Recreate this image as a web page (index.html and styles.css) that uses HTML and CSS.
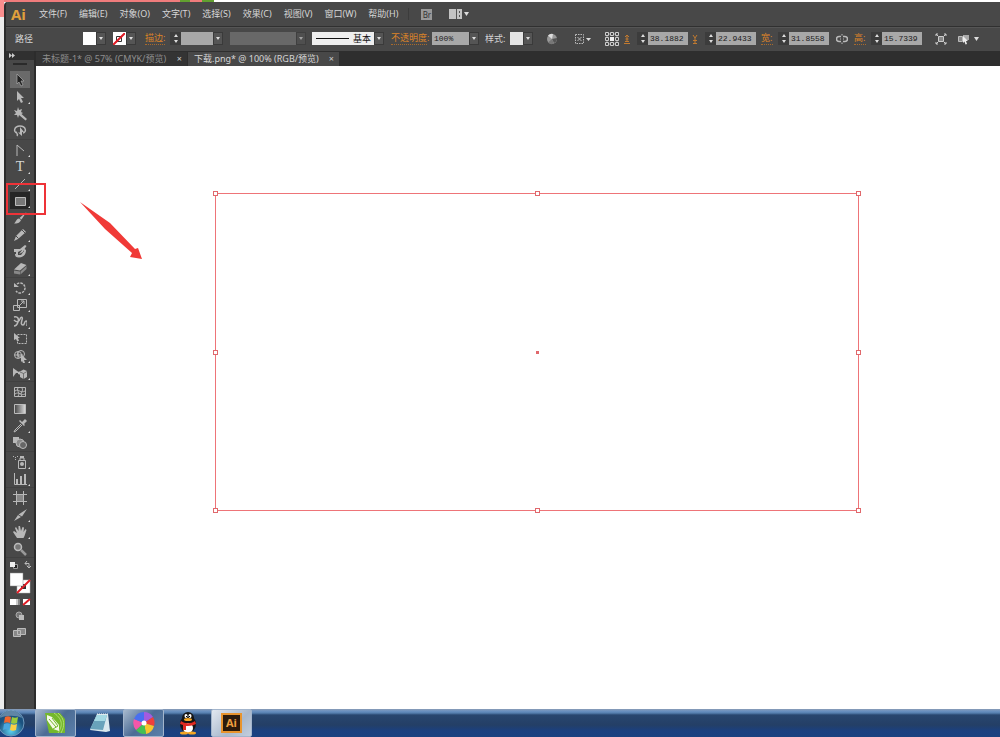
FILE: index.html
```
<!DOCTYPE html>
<html lang="zh-CN">
<head>
    <meta charset="UTF-8">
    <meta name="viewport" content="width=device-width, initial-scale=1.0">
    <title>下载.png</title>
    <link rel="stylesheet" href="styles.css">
</head>
<body>
    <div class="desktop">
        <div class="app">
            <header class="menubar">
                <span class="logo">Ai</span>
                <nav class="menus">
                    <a href="#">文件(F)</a>
                    <a href="#">编辑(E)</a>
                    <a href="#">对象(O)</a>
                    <a href="#">文字(T)</a>
                    <a href="#">选择(S)</a>
                    <a href="#">效果(C)</a>
                    <a href="#">视图(V)</a>
                    <a href="#">窗口(W)</a>
                    <a href="#">帮助(H)</a>
                </nav>
                <button class="bridge" aria-label="Bridge">Br</button>
                <button class="arrange" aria-label="排列文档">
                    <svg width="20" height="12" viewBox="0 0 20 12"><path fill="#c4c4c4" d="M0 1h13v10H0z"/><path stroke="#555" d="M7.500 1v10M10.500 3v2M10.500 7v2"/><path fill="#ddd" d="M15 4h5l-2.500 4z"/></svg>
                </button>
            </header>

            <div class="controls">
                <span class="path-name">路径</span>
                <div class="field">
                    <button class="swatch" aria-label="填色"></button><button class="drop" aria-label="填色菜单"></button>
                </div>
                <div class="field">
                    <button class="swatch none" aria-label="描边颜色"><svg width="12" height="12" viewBox="0 0 12 12"><path fill="none" stroke="#333" d="M3.500 3.500h5v5h-5z"/><path stroke="#e01b24" stroke-width="2" d="M0 12L12 0"/></svg></button><button class="drop" aria-label="描边颜色菜单"></button>
                </div>
                <div class="field">
                    <label class="orange link wide" for="stroke">描边:</label>
                    <button class="spin" aria-label="调整描边"></button><input class="gray" id="stroke" type="text"><button class="drop" aria-label="描边菜单"></button>
                </div>
                <div class="field">
                    <select class="profile" aria-label="变量宽度配置文件" disabled><option></option></select><span class="drop dim"></span>
                </div>
                <div class="field">
                    <span class="brush"><select aria-label="画笔定义"><option>基本</option></select></span><span class="drop"></span>
                </div>
                <div class="field">
                    <label class="orange link opacity" for="opacity">不透明度:</label>
                    <input class="percent" id="opacity" type="text" value="100%"><button class="drop" aria-label="不透明度菜单"></button>
                </div>
                <div class="field">
                    <span class="style-name">样式:</span>
                    <button class="swatch pale" aria-label="图形样式"></button><button class="drop" aria-label="样式菜单"></button>
                </div>
                <button class="tiny" aria-label="重新着色图稿">
                    <svg width="12" height="12" viewBox="0 0 12 12"><circle cx="6" cy="6" r="5" fill="#999"/><path fill="#ddd" d="M6 6L2 2.500A5 5 0 0 1 7 1z"/><path fill="#555" d="M6 6l5-1a5 5 0 0 1-3 5z"/><path fill="#777" d="M6 6l2 4.500a5 5 0 0 1-6-1z"/></svg>
                </button>
                <button class="tiny" aria-label="对齐">
                    <svg width="18" height="12" viewBox="0 0 18 12"><path fill="none" stroke="#bbb" stroke-dasharray="1.500 1" d="M1.500 1.500h8v9h-8z"/><path stroke="#bbb" d="M3.500 4l4 4M7.500 4l-4 4"/><path fill="#ddd" d="M12 5h5l-2.500 3z"/></svg>
                </button>
                <button class="tiny" aria-label="参考点">
                    <svg width="16" height="16" viewBox="0 0 16 16"><path fill="none" stroke="#999" d="M3 3h10v10H3z"/><path fill="#484848" stroke="#ccc" d="M1.500 1.500h3v3h-3zM6.500 1.500h3v3h-3zM11.500 1.500h3v3h-3zM1.500 6.500h3v3h-3zM11.500 6.500h3v3h-3zM1.500 11.500h3v3h-3zM6.500 11.500h3v3h-3zM11.500 11.500h3v3h-3z"/><path fill="#eee" d="M6 6h4v4H6z"/></svg>
                </button>
                <div class="field">
                    <label class="orange axis" for="x"><svg width="6" height="10" viewBox="0 0 6 10"><path fill="none" stroke="#c17a30" d="M0 9.500h6M1 7.500h4M3 1v6M1 3l2-2 2 2M1.500 5h3"/></svg></label>
                    <button class="spin" aria-label="调整 X"></button><input class="num" id="x" aria-label="X" type="text" value="38.1882">
                </div>
                <div class="field">
                    <label class="orange axis" for="y"><svg width="6" height="10" viewBox="0 0 6 10"><path fill="none" stroke="#c17a30" d="M1 1l2 3 2-3M3 4v5M1 6.500h4M1 9.500h4"/></svg></label>
                    <button class="spin" aria-label="调整 Y"></button><input class="num" id="y" aria-label="Y" type="text" value="22.9433">
                </div>
                <div class="field">
                    <label class="orange link size" for="w">宽:</label>
                    <button class="spin" aria-label="调整宽度"></button><input class="num" id="w" type="text" value="31.8558">
                </div>
                <button class="tiny" aria-label="约束宽度和高度比例">
                    <svg width="12" height="10" viewBox="0 0 12 10"><path fill="none" stroke="#bbb" stroke-width="1.500" d="M5 2.500H3a2.500 2.500 0 0 0 0 5h2M7 2.500h2a2.500 2.500 0 0 1 0 5H7"/><path stroke="#bbb" d="M4 5h1M7 5h1M6 0v1.500M6 8.500V10"/></svg>
                </button>
                <div class="field">
                    <label class="orange link size" for="h">高:</label>
                    <button class="spin" aria-label="调整高度"></button><input class="num" id="h" type="text" value="15.7339">
                </div>
                <button class="tiny" aria-label="隔离选中的对象">
                    <svg width="12" height="12" viewBox="0 0 12 12"><path fill="#888" stroke="#ccc" d="M3.500 3.500h5v5h-5z"/><path fill="none" stroke="#ccc" d="M1 3V1h2M9 1h2v2M1 9v2h2M9 11h2V9M1 1l2 2M11 1L9 3M1 11l2-2M11 11L9 9"/></svg>
                </button>
                <button class="tiny" aria-label="选择类似的对象">
                    <svg width="22" height="12" viewBox="0 0 22 12"><path fill="#888" stroke="#bbb" d="M.5 3.500h4v5h-4z"/><path fill="#aaa" d="M5 2h6v5H5z"/><path fill="#eee" d="M5 3l5 5H8l1 3-1.500.5-1-3L5 10z"/><path fill="#ddd" d="M16 4h5l-2.500 4z"/></svg>
                </button>
            </div>

            <div class="workspace">
                <aside class="toolbox">
                    <div class="collapse">
                        <svg width="6" height="5" viewBox="0 0 6 5"><path fill="#ccc" d="M0 0l3 2.500L0 5zM3 0l3 2.500L3 5z"/></svg>
                    </div>
                    <div class="grip"></div>
                    <div class="tools">
                        <div class="group">
                            <button class="tool active" aria-label="选择工具"><svg viewBox="0 0 14 14"><path fill="#222" stroke="#aaa" stroke-width=".7" d="M4 1l7 7H8l2 4-2 1-2-4-2 2z"/></svg></button>
                            <button class="tool more" aria-label="直接选择工具"><svg viewBox="0 0 14 14"><path d="M4 1l7 7H8l2 4-2 1-2-4-2 2z"/></svg></button>
                            <button class="tool" aria-label="魔棒工具"><svg viewBox="0 0 14 14"><path d="M5 0l1 3 3-1-1 3 2 1-1.500 1L14 12l-1.500 1.500L6 8l-1 3-1-3-3 0 2-2-2-3 3 1z"/></svg></button>
                            <button class="tool" aria-label="套索工具"><svg viewBox="0 0 14 14"><path class="line" stroke-width="1.500" d="M4 9C0 8 1 2 7 2s7 6 3 7M4 8c-2 1 2 2 0 4"/><path d="M7 3l4 5H9v4L5 8.500h2z"/></svg></button>
                        </div>
                        <div class="group">
                            <button class="tool more" aria-label="钢笔工具"><svg viewBox="0 0 14 14"><path class="line" d="M4 13V2l7 6"/></svg></button>
                            <button class="tool more letter" aria-label="文字工具">T</button>
                            <button class="tool more" aria-label="直线段工具"><svg viewBox="0 0 14 14"><path class="line" d="M2 12L12 2"/></svg></button>
                            <button class="tool more picked" aria-label="矩形工具"><svg viewBox="0 0 14 14"><path fill="#777" stroke="#bbb" d="M2.500 3.500h10v8h-10z"/></svg></button>
                            <button class="tool" aria-label="画笔工具"><svg viewBox="0 0 14 14"><path d="M13.500 1L8.500 8.500 6.500 7zM6 7.500l2 1.500C7 12 4 12.500 1 12.500c2-1 2-4.500 5-5z"/></svg></button>
                            <button class="tool more" aria-label="铅笔工具"><svg viewBox="0 0 14 14"><path d="M10 1l3 3-8 7-4 2 2-5z"/><path stroke="#484848" d="M3 8l2.500 2.500M9 2l3 3"/></svg></button>
                            <button class="tool" aria-label="斑点画笔工具"><svg viewBox="0 0 14 14"><path d="M1 4h6l5-4 1.500 1-2 3 1.500 1c0 5-3 7.500-7 7.500-3 0-4-1-4-3.500h1V7H1z"/><path fill="#484848" d="M9 5L5 7v3h3l3-4z"/><path d="M10 4L6 9l4-2z"/></svg></button>
                            <button class="tool more" aria-label="橡皮擦工具"><svg viewBox="0 0 14 14"><path d="M8 1l5.500 2-6.500 5.500L1 7.500z"/><path fill="#888" d="M1 8.500l6 1V12.500l-6-1zM7.500 9.500l6-5.500v3l-6 5.500z"/></svg></button>
                        </div>
                        <div class="group">
                            <button class="tool more" aria-label="旋转工具"><svg viewBox="0 0 14 14"><path class="line" stroke-width="1.500" stroke-dasharray="2.500 1" d="M4 3a5 5 0 1 1-1 7"/><path d="M1 2v4h5z"/></svg></button>
                            <button class="tool more" aria-label="比例缩放工具"><svg viewBox="0 0 14 14"><path class="line" d="M.5 7.500h6v5h-6zM4.500 1.500h9v8h-9z"/><path class="line" d="M6 8l5-5M8 3h3v3"/></svg></button>
                            <button class="tool more" aria-label="宽度工具"><svg viewBox="0 0 14 14"><path class="line" stroke-width="1.500" d="M1 2c4-1 5 2 4 5s-3 4-4 4M1 5c3 3 5 2 6-1s3-2 2 1-1 5 1 5 1-4 3-4 1 3 1 5"/></svg></button>
                            <button class="tool" aria-label="自由变换工具"><svg viewBox="0 0 14 14"><path class="line" stroke-dasharray="2 1" d="M4.500 2.500h9v9h-9z"/><path d="M1 1l6 5H5l1 3-2 0-1-2-2 1z"/></svg></button>
                            <button class="tool more" aria-label="形状生成器工具"><svg viewBox="0 0 14 14"><circle class="line" cx="5" cy="6" r="3.500"/><circle class="line" cx="8" cy="5" r="3.500"/><path class="line" d="M2 6h8M5 3v6"/><path d="M8 5l6 6h-3l1 3-2 0-1-2-1 1z"/></svg></button>
                            <button class="tool more" aria-label="透视网格工具"><svg viewBox="0 0 14 14"><path d="M0 2l7 5-4 0-3 4zM5 6l3-1v4L5 8zM7 5.500l3.500-2L14 5v6l-3.500 2L7 11z"/><path fill="none" stroke="#555" stroke-width=".7" d="M7 6l3.500 1.500L14 5.500M10.500 7.500V13"/></svg></button>
                        </div>
                        <div class="group">
                            <button class="tool" aria-label="网格工具"><svg viewBox="0 0 14 14"><path class="line" d="M1.500 2.500h11v9h-11zM2 6c4-3 5 3 10 0M2 9c4-3 6 2 10 0M5 3c-2 3 3 5 0 8M9 3c2 3-3 5 0 8"/></svg></button>
                            <button class="tool" aria-label="渐变工具"><svg viewBox="0 0 14 14"><defs><linearGradient id="fade"><stop stop-color="#444"/><stop offset="1" stop-color="#ddd"/></linearGradient></defs><path fill="url(#fade)" stroke="#bbb" d="M1.500 2.500h11v9h-11z"/></svg></button>
                            <button class="tool more" aria-label="吸管工具"><svg viewBox="0 0 14 14"><path d="M9 3l3-3 2 2-3 3 1 1-1 1-5-5 1-1z"/><path class="line" d="M8 5l-6 6-1 2 2-1 6-6"/></svg></button>
                            <button class="tool" aria-label="混合工具"><svg viewBox="0 0 14 14"><path d="M0 1h6v6H0z"/><circle cx="7" cy="7" r="4" fill="#888" stroke="#bbb"/><circle cx="10" cy="9" r="3.500" fill="#666" stroke="#bbb"/></svg></button>
                        </div>
                        <div class="group">
                            <button class="tool more" aria-label="符号喷枪工具"><svg viewBox="0 0 14 14"><path class="line" d="M5.500 5.500h7v8h-7zM7 5V3h4v2"/><path d="M7 1h4v2H7zM0 1h1v1H0zM2 2h1v1H2zM4 1h1v1H4zM2 4h1v1H2z"/><circle cx="9" cy="9" r="2"/></svg></button>
                            <button class="tool more" aria-label="柱形图工具"><svg viewBox="0 0 14 14"><path class="line" d="M1.500 1v11.500H14"/><path d="M3 7h2v5H3zM7 4h2v8H7zM11 2h2v10h-2z"/></svg></button>
                        </div>
                        <div class="group">
                            <button class="tool" aria-label="画板工具"><svg viewBox="0 0 14 14"><path fill="#888" d="M3 3h8v8H3z"/><path class="line" d="M3.500 0v14M10.500 0v14M0 3.500h14M0 10.500h14"/></svg></button>
                            <button class="tool more" aria-label="切片工具"><svg viewBox="0 0 14 14"><path d="M14 1L9 8.500 5.500 6.500zM5 7l3 2-7 4z"/></svg></button>
                            <button class="tool more" aria-label="抓手工具"><svg viewBox="0 0 14 14"><path d="M4 13L0 7l1-1 3 2-2-5 1-1 2.500 4L5.500 1h1.500l1 5 1.500-4 1.500.5L10.500 7l2-3 1 1-2 6-1 2z"/></svg></button>
                            <button class="tool" aria-label="缩放工具"><svg viewBox="0 0 14 14"><circle cx="5" cy="5" r="3.500" fill="#777" stroke="#bbb" stroke-width="1.500"/><path stroke="#999" stroke-width="2.500" d="M8 8l5 5"/></svg></button>
                        </div>
                    </div>
                    <div class="colors">
                        <svg width="22" height="76" viewBox="0 0 22 76">
                            <path fill="#222" stroke="#999" d="M3.500 3.500h4v4h-4z"/>
                            <path fill="#eee" d="M0 1h5v5H0z"/>
                            <path fill="none" stroke="#bbb" d="M15 2.500h4v4M17 0l-2 2.500 2 2M17 5l2 2 2-2"/>
                            <path fill="#fff" stroke="#bbb" stroke-width=".5" d="M7 19h13v13H7z"/>
                            <path fill="#333" d="M11 23h5v5h-5z"/>
                            <path stroke="#e01b24" stroke-width="2" d="M7 32l13-13"/>
                            <path fill="#fff" stroke="#888" stroke-width=".5" d="M0 12h13v13H0z"/>
                            <path fill="#fff" d="M0 38h6v6H0zM13 38h7v6h-7z"/>
                            <path fill="#ccc" d="M6 38h2v6H6z"/>
                            <path fill="#888" d="M8 38h2v6H8z"/>
                            <path stroke="#e01b24" stroke-width="2" d="M13 44l7-6"/>
                            <circle cx="9" cy="54" r="3" fill="#777" stroke="#aaa"/>
                            <path fill="#bbb" d="M9 54h5v5H9z"/>
                            <path fill="#888" stroke="#bbb" d="M3.500 69.500h7v6h-7zM7.500 67.500h8v6h-8z"/>
                        </svg>
                    </div>
                </aside>

                <main class="document">
                    <div class="tabs">
                        <div class="tab"><a href="#">未标题-1* @ 57% (CMYK/预览)</a><button aria-label="关闭">×</button></div>
                        <div class="tab current"><a href="#">下载.png* @ 100% (RGB/预览)</a><button aria-label="关闭">×</button></div>
                    </div>
                    <div class="canvas">
                        <div class="selection">
                            <i></i><i></i><i></i>
                            <i></i><b></b><i></i>
                            <i></i><i></i><i></i>
                        </div>
                        <svg class="arrow" width="64" height="60" viewBox="0 0 64 60"><path fill="#f03a37" d="M0 0l30 21 25 26 3-1 4 11-12-2 2-4-27-24z"/></svg>
                        <div class="marker"></div>
                    </div>
                </main>
            </div>
        </div>
    </div>

    <footer class="taskbar">
        <button class="start" aria-label="开始">
            <svg width="26" height="28" viewBox="0 0 26 28">
                <defs><radialGradient id="orb" cy=".8"><stop stop-color="#5cd0f0"/><stop offset="1" stop-color="#1c527f"/></radialGradient></defs>
                <circle cx="11" cy="14" r="13" fill="url(#orb)" stroke="#6f99bd"/>
                <path fill="#f1662d" d="M5 8c2-1 4-1 6 0l-1 6c-2-1-4-1-6 0z"/>
                <path fill="#9bcb3c" d="M12 8c2 1 4 1 6 0l-1 6c-2 1-4 1-6 0z"/>
                <path fill="#4aa7df" d="M4 15c2-1 4-1 6 0l-1 6c-2-1-4-1-6 0z"/>
                <path fill="#fbd044" d="M11 15c2 1 4 1 6 0l-1 6c-2 1-4 1-6 0z"/>
                <path fill="#fff" opacity=".3" d="M0 9C4-1 18-1 22 9 16 6 6 6 0 9z"/>
            </svg>
        </button>
        <button class="task open" aria-label="CorelDRAW">
            <svg width="24" height="22" viewBox="0 0 24 22"><path fill="#74b82c" d="M1 1h15l5 6v14H5z"/><path fill="none" stroke="#b2dc70" d="M14 1c7 6 7 13 3 20M10 1c10 7 8 14 4 20"/><path fill="#f4f8e8" d="M3 3l5 2 7 8v6l-6-2-6-9z"/><path stroke="#74b82c" d="M5 7l7 8M8 6l6 8M9 17l5-3"/></svg>
        </button>
        <button class="task" aria-label="记事本">
            <svg width="24" height="22" viewBox="0 0 24 22"><path fill="#d9e8ee" d="M9 2h11l2 17-4 1-16-2z"/><path fill="#69a3bb" d="M9 3h10l-4 15-13-1z"/><path fill="#a4d9e4" d="M9 3h10l-2 6H6z"/><path stroke="#eee" stroke-dasharray="1 1" d="M9 2h11"/></svg>
        </button>
        <button class="task open" aria-label="浏览器">
            <svg width="24" height="24" viewBox="0 0 24 24"><path fill="#a45be0" d="M12 12V1a11 11 0 0 1 9 5z"/><path fill="#ee3f3c" d="M12 12l9-6a11 11 0 0 1 1 9z"/><path fill="#f6c62e" d="M12 12l10 3a11 11 0 0 1-8 8z"/><path fill="#45c052" d="M12 12l2 11a11 11 0 0 1-10-4z"/><path fill="#f357a9" d="M12 12l-8 7a11 11 0 0 1-2-11z"/><path fill="#496ff0" d="M12 12L2 8a11 11 0 0 1 10-7z"/><circle cx="12" cy="12" r="2.500" fill="#fff"/></svg>
        </button>
        <button class="task" aria-label="QQ">
            <svg width="24" height="24" viewBox="0 0 24 24"><ellipse cx="12" cy="13" rx="8" ry="9" fill="#151515"/><ellipse cx="12" cy="7" rx="6" ry="6" fill="#151515"/><ellipse cx="12" cy="17" rx="5" ry="5" fill="#fff"/><ellipse cx="10" cy="5" rx="1.500" ry="2" fill="#fff"/><ellipse cx="14" cy="5" rx="1.500" ry="2" fill="#fff"/><path d="M10 5h1v1h-1zM13 5h1v1h-1z"/><ellipse cx="12" cy="8.500" rx="4" ry="1.500" fill="#f5a623"/><path fill="#e02b22" d="M5 10c4 3 10 3 14 0l1 3c-4 2-8 2-10 2v4H7v-5l-3-1z"/><ellipse cx="8" cy="22" rx="4" ry="1.500" fill="#f5a623"/><ellipse cx="16" cy="22" rx="4" ry="1.500" fill="#f5a623"/></svg>
        </button>
        <button class="task open front" aria-label="Illustrator"><span class="ai">Ai</span></button>
    </footer>
</body>
</html>
```
FILE: styles.css
```
* {
    box-sizing: border-box;
}
body {
    margin: 0;
    height: 100vh;
    display: flex;
    flex-direction: column;
    overflow: hidden;
    font-family: "Noto Sans", "Noto Sans CJK SC", sans-serif;
    font-size: 9px;
    line-height: 12px;
    color: #d6d6d6;
}
button, input, select {
    margin: 0;
    padding: 0;
    border: none;
    border-radius: 0;
    background: none;
    color: inherit;
    font: inherit;
}
a {
    color: inherit;
    text-decoration: none;
}
svg {
    display: block;
}
.desktop {
    flex: 1;
    min-height: 0;
    display: flex;
    padding: 2px 0 0 4px;
    background: linear-gradient(#f98d8d, #f98d8d) 0 0 / 4px 17px no-repeat,
        linear-gradient(90deg, #f07c7c 180px, #62a030 180px, #62a030 190px, #f07c7c 190px, #f07c7c 202px, #62a030 202px, #62a030 214px, #fff 214px) 0 0 / 100% 2px no-repeat,
        #ececec;
}
.app {
    flex: 1;
    min-width: 0;
    display: flex;
    flex-direction: column;
    background: #484848;
    border-left: 2px solid #2c2c2c;
    border-top-left-radius: 4px;
}

/* menu bar */
.menubar {
    height: 25px;
    display: flex;
    align-items: center;
    border-bottom: 1px solid #303030;
}
.logo {
    width: 33px;
    padding-left: 5px;
    font: bold 15px/20px "Open Sans", sans-serif;
    color: #e0a03c;
}
.menus {
    display: flex;
    gap: 12px;
    padding-right: 10px;
    border-right: 1px solid #3c3c3c;
    white-space: nowrap;
}
.bridge {
    width: 11px;
    height: 11px;
    margin: 0 17px 0 12px;
    background: #999;
    color: #333;
    font-size: 8px;
    line-height: 11px;
}

/* control bar */
.controls {
    height: 24px;
    padding: 0 0 2px 9px;
    display: grid;
    grid-template-columns: 68px 30px 32px 85px 82px 79px 94px 61px 28px 30px 20px 68px 69px 75px 18px 81px 23px 24px;
    align-items: center;
    border-top: 1px solid #555;
    white-space: nowrap;
}
.field {
    display: flex;
    align-items: center;
}
.swatch {
    width: 13px;
    height: 13px;
    background: #fff;
}
.pale {
    background: #e4e4e4;
}
.drop {
    width: 10px;
    height: 13px;
    display: flex;
    align-items: center;
    justify-content: center;
    background: #555;
    border: 1px solid #3a3a3a;
}
.drop::after {
    content: "";
    border: 2px solid transparent;
    border-top: 3px solid #ddd;
    border-bottom: none;
}
.dim {
    opacity: .6;
}
.orange {
    color: #dc8428;
}
.link {
    border-bottom: 1px dotted #a86a2c;
}
.wide {
    width: 20px;
    margin-right: 5px;
}
.opacity {
    width: 36px;
    margin-right: 5px;
}
.style-name {
    width: 20px;
    margin-right: 5px;
}
.size {
    width: 12px;
    margin-right: 5px;
}
.axis {
    width: 8px;
    margin-right: 5px;
}
.spin {
    width: 11px;
    height: 13px;
    display: flex;
    flex-direction: column;
    align-items: center;
    justify-content: center;
    gap: 3px;
    background: #3c3c3c;
}
.spin::before, .spin::after {
    content: "";
    border: 2px solid transparent;
}
.spin::before {
    border-top: none;
    border-bottom: 3px solid #ddd;
}
.spin::after {
    border-bottom: none;
    border-top: 3px solid #ddd;
}
.gray, .percent, .num, .profile {
    height: 13px;
    background: #a8a8a8;
    color: #1c1c1c;
}
.gray {
    width: 32px;
}
.percent, .num {
    padding-left: 2px;
    font-family: "Liberation Mono", monospace;
    font-size: 8px;
}
.percent {
    width: 37px;
}
.num {
    width: 40px;
}
.profile {
    width: 66px;
    appearance: none;
    background: #767676;
}
.brush {
    width: 62px;
    height: 13px;
    display: flex;
    align-items: center;
    gap: 4px;
    padding-left: 4px;
    background: #eee;
    color: #111;
}
.brush::before {
    content: "";
    width: 33px;
    border-top: 1px solid #111;
}
.brush select {
    appearance: none;
    width: 20px;
    height: 13px;
}
.tiny {
    justify-self: start;
}

/* tools on the left */
.workspace {
    flex: 1;
    min-height: 0;
    display: flex;
}
.toolbox {
    width: 30px;
    border-right: 2px solid #2c2c2c;
}
.collapse {
    height: 9px;
    padding: 2px 3px;
    background: #303030;
}
.grip {
    width: 14px;
    height: 2px;
    margin: 3px auto 6px 7px;
    background: #2a2a2a;
}
.tools {
    display: flex;
    flex-direction: column;
    gap: 1px;
}
.group {
    border-bottom: 1px solid #404040;
}
.tool {
    position: relative;
    width: 20px;
    height: 17px;
    margin-left: 4px;
    display: flex;
    align-items: center;
    justify-content: center;
}
.tool svg {
    width: 14px;
    height: 14px;
    fill: #b8b8b8;
}
.tool .line {
    fill: none;
    stroke: #b8b8b8;
}
.more::after {
    content: "";
    position: absolute;
    right: 0;
    bottom: 1px;
    border-left: 2px solid transparent;
    border-bottom: 2px solid #ddd;
}
.active {
    background: #6a6a6a;
}
.picked {
    background: #262626;
}
.letter {
    font: 14px/17px "Liberation Serif", serif;
}
.colors {
    padding: 3px 0 0 4px;
}

/* document */
.document {
    flex: 1;
    min-width: 0;
    display: flex;
    flex-direction: column;
}
.tabs {
    height: 15px;
    display: flex;
    gap: 1px;
    padding-top: 1px;
    background: #2e2e2e;
}
.tab {
    width: 151px;
    display: flex;
    align-items: center;
    justify-content: space-between;
    padding: 0 5px 0 6px;
    background: #343434;
    color: #8e8e8e;
    white-space: nowrap;
}
.tab button {
    color: #ccc;
}
.current {
    background: #484848;
    color: #d6d6d6;
}
.canvas {
    flex: 1;
    position: relative;
    background: #fff;
}
.selection {
    position: absolute;
    left: 177px;
    top: 125px;
    width: 648px;
    height: 322px;
    display: grid;
    grid-template-columns: 5px 5px 5px;
    justify-content: space-between;
    align-content: space-between;
    justify-items: center;
    align-items: center;
    isolation: isolate;
}
.selection::before {
    content: "";
    position: absolute;
    inset: 2px;
    z-index: -1;
    border: 1px solid #ee7478;
}
.selection i {
    width: 5px;
    height: 5px;
    background: #fff;
    border: 1px solid #e0686c;
}
.selection b {
    width: 3px;
    height: 3px;
    background: #e0686c;
}
.arrow {
    position: absolute;
    left: 44px;
    top: 136px;
}
.marker {
    position: absolute;
    left: -30px;
    top: 117px;
    width: 40px;
    height: 32px;
    border: 2px solid #ee3338;
}

/* taskbar */
.taskbar {
    height: 28px;
    display: flex;
    gap: 3px;
    background: linear-gradient(#8a9bb5, #6c92c2 2px, #5680b0 4px, #28466f 6px, #243f66 16px, #1b4080 22px, #1a4180);
}
.start {
    width: 32px;
}
.task {
    width: 41px;
    display: flex;
    align-items: center;
    justify-content: center;
}
.open {
    border: 1px solid #a3b5cc;
    border-radius: 2px;
    background: linear-gradient(135deg, #a6b8cd, #4c6c95 50%, #5b80aa);
}
.front {
    background: linear-gradient(135deg, #e2e8f0, #a9b8cc 60%, #c3cedd);
}
.ai {
    width: 21px;
    height: 20px;
    border: 2px solid #e8942e;
    background: #2c1b0c;
    color: #f0a040;
    font: bold 11px/16px "Open Sans", sans-serif;
}
```
